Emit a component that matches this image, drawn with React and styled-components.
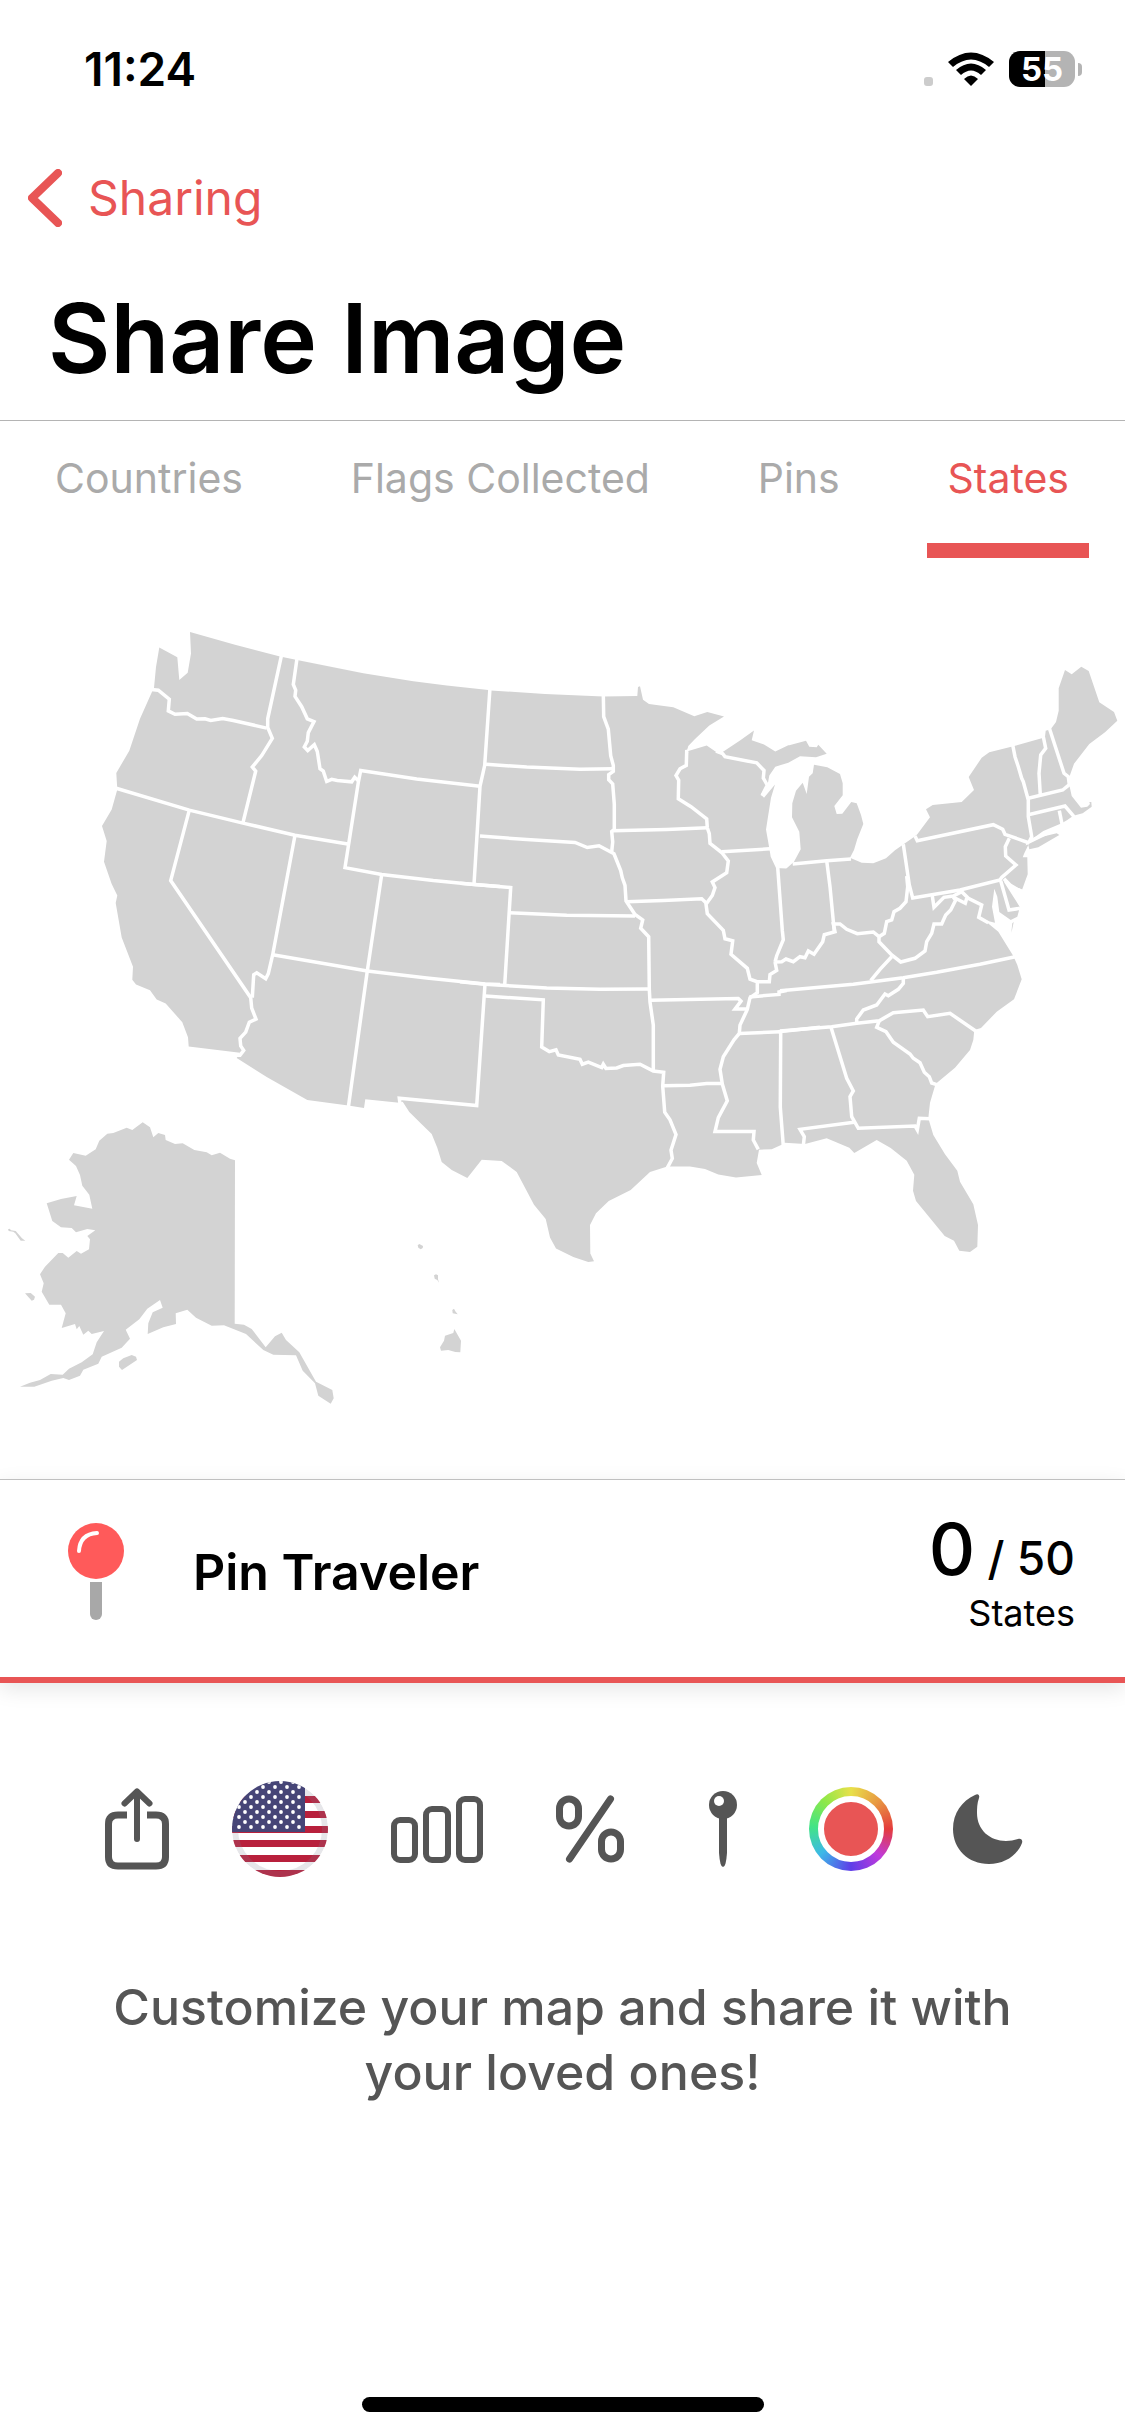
import React, { useId } from "react";
import styled, { createGlobalStyle } from "styled-components";

const RED = "#e85555";
const INK = "#555555";

const Global = createGlobalStyle`
  *, *::before, *::after { box-sizing: border-box; }
  body { margin: 0; background: #ffffff; }
  body, button { font-family: Inter, "Liberation Sans", sans-serif; }
`;

const Page = styled.div`
  display: flex;
  flex-direction: column;
  min-height: 100vh;
  color: #000000;
`;

const StatusBar = styled.header`
  display: flex;
  align-items: center;
  justify-content: space-between;
  height: 138px;
  padding: 0 43px 0 84px;
`;

const Clock = styled.time`
  font-size: 46px;
  line-height: 56px;
  font-weight: 600;
`;

const StatusIcons = styled.div`
  display: flex;
  align-items: center;
  gap: 15px;
`;

const BatteryBox = styled.div`
  display: flex;
  align-items: center;
  gap: 3px;
`;

const BatteryBody = styled.span`
  width: 66px;
  height: 36px;
  border-radius: 11px;
  background: linear-gradient(to right, #000000 55%, #b4b4b4 55%);
  color: #ffffff;
  font-size: 33px;
  line-height: 36px;
  font-weight: 700;
  text-align: center;
`;

const BatteryTip = styled.span`
  width: 4px;
  height: 13px;
  border-radius: 0 6px 6px 0;
  background: #b4b4b4;
`;

const BackButton = styled.button`
  display: flex;
  align-items: center;
  align-self: flex-start;
  gap: 26px;
  height: 120px;
  padding: 0 28px;
  border: 0;
  background: none;
  color: ${RED};
  font-size: 48px;
  line-height: 60px;
`;

const Title = styled.h1`
  margin: 0;
  padding: 20px 48px 22px;
  font-size: 96px;
  line-height: 120px;
  font-weight: 600;
`;

const Tabs = styled.nav`
  display: flex;
  justify-content: space-between;
  padding: 0 36px 0 35px;
  border-top: 1px solid #b4b4b4;
`;

const Tab = styled.button`
  height: 137px;
  padding: 0 20px 8px;
  border: 0;
  border-bottom: 15px solid ${(p) => (p.$active ? RED : "transparent")};
  background: none;
  color: ${(p) => (p.$active ? RED : "#aaaaaa")};
  font-size: 41px;
  line-height: 50px;
`;

const MapPanel = styled.main`
  padding: 42px 0 48px;
`;

const MapDrawing = styled.svg`
  display: block;
  width: 100%;
  height: auto;
`;

const Summary = styled.section`
  display: flex;
  align-items: center;
  padding: 0 50px 14px 68px;
  height: 204px;
  border-top: 1px solid #c0c0c0;
  border-bottom: 6px solid ${RED};
  box-shadow: 0 6px 20px rgba(0, 0, 0, 0.1);
`;

const Brand = styled.h2`
  flex: 1;
  margin: 0 0 0 68px;
  font-size: 50px;
  line-height: 64px;
  font-weight: 600;
`;

const Score = styled.div`
  display: flex;
  flex-direction: column;
  align-items: flex-end;
  padding-top: 8px;
`;

const Count = styled.div`
  font-size: 46px;
  line-height: 66px;
  font-weight: 500;
`;

const CountValue = styled.span`
  font-size: 72px;
`;

const CountUnit = styled.div`
  font-size: 36px;
  line-height: 44px;
`;

const Toolbar = styled.div`
  display: flex;
  align-items: center;
  justify-content: space-between;
  padding: 98px 102px 0 105px;
`;

const Tool = styled.button`
  display: flex;
  justify-content: center;
  width: ${(p) => p.$width}px;
  padding: 0;
  border: 0;
  background: none;
  color: ${INK};
`;

const ColourWheel = styled.span`
  display: flex;
  flex: none;
  align-items: center;
  justify-content: center;
  width: 84px;
  height: 84px;
  border-radius: 50%;
  background: conic-gradient(#e8e04a, #e89a42 12%, #e43c3c 25%, #c03adc 37%, #5e3ee8 50%, #3cb8e8 64%, #42e486 76%, #8ee848 88%, #e8e04a);
`;

const ColourDot = styled.span`
  width: 66px;
  height: 66px;
  border: 6px solid #ffffff;
  border-radius: 50%;
  background: ${RED};
`;

const Hint = styled.p`
  margin: 98px 100px 0;
  color: ${INK};
  font-size: 50px;
  line-height: 65px;
  font-weight: 500;
  text-align: center;
`;

const HomeIndicator = styled.div`
  align-self: center;
  width: 402px;
  height: 15px;
  margin: auto 0 24px;
  border-radius: 8px;
  background: #000000;
`;

const sheet = (x0, y0, sx, sy) => (text) =>
  text.trim().split(/\s+/).map((pair) => {
    const [x, y] = pair.split(",").map(Number);
    return `${(x0 + x / sx).toFixed(1)},${(y0 + y / sy).toFixed(1)}`;
  });

const west = sheet(80, 600, 3, 2.904);
const mid = sheet(460, 640, 3, 2.376);
const north = sheet(780, 640, 3, 3);
const south = sheet(780, 920, 3, 3);
const far = sheet(0, 1100, 3, 3);

const mainland = [
  ...west("218,262 222,255 228,195 238,138 292,166 298,232 323,211 333,155 330,93 465,130 600,164 655,175 850,213 1000,236 1100,248 1225,261"),
  ...mid("92,120 255,128 430,134 532,133 534,112 540,110 549,142 567,152 640,160 703,181 742,171 792,182 748,203 705,235 685,252 680,265 740,251 772,268 788,266 840,239 882,215 875,238 912,248 946,265 985,250"),
  ...north("28,316 78,302 88,320 110,322 115,314 140,341 108,352 60,349 25,368 0,376"),
  ...mid("946,301 928,322 922,348 903,366 912,375 945,343 933,375 928,400 918,450 928,495 932,515 948,542 978,543"),
  ...north("20,685 42,665 62,628 58,575 36,532 37,490 48,452 68,428 80,462 87,410 98,400 102,374 142,382 180,402 188,430 188,466 163,498 170,522 187,521 214,486 230,490 243,525 250,552 232,597 222,630 210,653 245,668 280,670 318,655 345,631 403,590 412,583 450,532 438,508 458,495 545,486 582,450 566,411 605,353 628,337 700,319 785,295 795,290 797,272 812,268 828,246 836,212 836,145 855,90 875,103 904,80 926,93 958,187 1002,216 1012,242 975,277 928,312 882,371 870,405 868,435 875,468 903,503 922,500 930,492 928,486 934,486 935,500 908,520 880,527 862,540 845,550 790,573 755,598 830,580 838,585 775,622 748,628 745,615 733,640 728,652 742,652 743,703 725,752 718,745 700,742 678,722 720,800 712,830 692,840 658,816 652,770 643,746 636,800 645,848 612,840"),
  ...south("655,35 700,108 712,135 725,178 702,238 650,275 603,324 583,330 580,360 570,390 525,443 470,489 465,497 450,548 445,595 460,645 495,703 532,752 540,785 580,853 594,915 592,980 570,996 538,992 522,962 494,948 408,843 399,812 403,764 380,722 332,684 290,660 223,699 208,683 140,655 75,672 15,668"),
  ...mid("968,1198 935,1210 897,1211 890,1243 905,1271 828,1277 775,1270 735,1257 690,1251 622,1251 570,1264 512,1307 446,1333 408,1362 390,1390 391,1458 402,1476 385,1478 340,1466 288,1446 270,1420 257,1376 222,1342 170,1264 125,1238 65,1235"),
  ...far("1402,234 1355,210 1325,186 1312,143 1295,102 1262,70 1228,36 1208,5"),
  ...west("958,1460 856,1450 852,1475 805,1468 682,1452 560,1385 470,1330 480,1315 326,1297 324,1270 307,1226 257,1172 230,1160 210,1133 168,1117 157,1103 159,1065 125,980 107,880 112,858 95,825 72,760 80,700 66,656 95,608 112,550 109,502 148,438 180,345"),
];

const islands = [
  far("207,179 220,159 257,167 287,148 298,122 322,101 340,99 380,83 397,90 428,67 450,82 460,112 475,99 495,105 497,120 525,132 548,130 583,150 620,157 635,166 660,158 690,176 705,181 704,671 732,674 755,687 797,742 825,709 845,698 858,720 898,757 948,845 997,870 1001,895 992,911 955,887 945,850 908,812 888,766 820,764 790,750 738,702 672,676 635,677 588,653 562,629 527,640 528,672 490,682 443,702 445,670 458,637 488,623 480,600 442,626 418,658 377,689 390,716 365,743 305,770 295,791 250,809 240,827 207,840 190,834 155,842 103,860 60,860 90,848 120,840 152,822 188,824 207,806 245,787 278,763 290,727 312,693 275,702 265,692 250,704 238,678 230,688 225,672 185,684 197,640 183,614 148,614 125,575 131,550 120,523 135,500 175,459 188,459 205,473 230,453 243,461 267,448 270,418 262,408 286,391 262,387 228,397 215,384 183,382 157,363 140,310 183,297 230,288 222,316 277,326 268,284 247,257 240,225 228,198"),
  far("357,785 370,775 395,765 408,770 411,780 366,810 357,800"),
  far("75,580 92,579 105,590 102,599 95,602"),
  far("24,388 29,386 33,391 47,393 66,415 76,422 62,422 46,400 40,395 26,393"),
  far("1253,436 1258,432 1269,438 1268,444 1262,448 1255,443"),
  far("1302,526 1308,523 1314,526 1314,538 1317,548 1312,540 1304,536"),
  far("1357,630 1362,626 1366,634 1373,643 1358,640"),
  far("1335,707 1360,699 1363,687 1383,722 1381,757 1366,756 1345,750 1323,752 1320,742 1332,722"),
  north("701,846 697,866 694,878 697,850"),
];

const borders = [
  west("214,260 235,262 268,288 265,322 285,332 322,330 350,346 375,345 392,350 428,344 460,350 560,372"),
  west("605,158 563,345 563,370 577,402 545,452 517,485 527,497 489,646"),
  west("651,170 640,245 647,262 645,280 665,310 682,345 702,353 685,385 682,410 673,427 683,437 703,420 712,440 720,490 730,497 740,527 755,521 772,524 815,528 824,515 835,525"),
  west("1230,255 1214,480 1200,541 1182,826"),
  west("1200,541 1010,520 842,495 835,530 795,777 905,797 1060,815 1182,826 1260,832"),
  west("106,546 328,610 489,648 645,683 803,709"),
  west("328,610 272,815 512,1155 515,1185 528,1217 508,1226 497,1255 480,1273 482,1295 491,1308 480,1322 464,1322"),
  west("645,683 578,1030 565,1085 557,1100 530,1083 521,1088 517,1155"),
  west("578,1030 862,1077 1040,1098 1215,1115 1260,1117"),
  west("905,797 862,1077 805,1474"),
  west("1215,1115 1190,1468 958,1447 960,1464"),
  mid("78,295 200,302 360,307 460,306"),
  mid("430,128 431,182 445,212 452,275 460,298 460,312 446,320 446,332 458,342 463,390 463,450 455,455 458,480 455,503"),
  mid("60,466 200,474 345,481 382,493 417,489 462,508 482,548 487,565 495,583 498,620 525,652 548,665 542,685 566,705 568,830 570,860 580,915 580,1025"),
  mid("457,453 620,450 742,446"),
  mid("0,578 152,588 134,820"),
  mid("148,648 320,654 525,656"),
  mid("0,812 76,818 260,827 420,830 566,829"),
  mid("500,622 610,619 725,615 740,626"),
  mid("76,846 250,855 245,967 268,978 288,974 295,986 360,996 367,1008 385,1003 425,1016 430,1008 438,1018 470,1017 490,1011 540,1008 580,1024 611,1027 608,1060 614,1122 630,1140 648,1175 633,1212 637,1232 622,1254"),
  mid("608,1059 690,1058 740,1054 787,1054"),
  mid("570,856 835,852 843,858 825,877 860,877"),
  mid("685,264 680,265 679,298 660,306 648,322 656,333 655,377 693,396 740,425 742,446 748,460 750,483 785,505 805,525 800,553 757,575 765,588 757,607 738,628 742,650 790,690 795,710 818,715 813,747 862,780 870,806 892,812 892,838 870,850 862,878 840,915 838,935 822,950 790,990 780,1020 787,1055 802,1095 775,1135 765,1168 882,1168 880,1188 895,1210"),
  mid("785,503 930,496"),
  mid("768,264 788,270 795,277 890,292 912,310 910,328 922,345 906,370 940,330"),
  mid("953,540 967,690 970,712 950,750 945,765"),
  mid("890,812 928,812 930,795 950,785 945,765"),
  north("-15,966 5,965 18,957 40,965 60,950 75,953 85,933 102,943 128,905 133,884 165,875 160,852 180,852 200,868 232,881 280,876 297,890 297,905 335,945 362,966 405,955 435,933 440,905 455,880 462,852 485,852 497,825 512,810 527,780 520,772"),
  north("38,672 140,662 213,657"),
  north("140,662 150,740 163,875"),
  north("370,613 388,735 398,774 540,750 660,720 665,712 708,675 677,648 676,620 688,595"),
  north("405,588 412,602 640,554 668,568 675,583 748,609"),
  north("380,708 383,740 378,785 360,805 342,815 335,840 320,845 313,880 297,890"),
  north("457,768 462,802 492,772 520,768 545,755 565,775 605,795 596,832 625,848"),
  north("520,772 556,790 560,775"),
  north("662,722 687,810 720,805"),
  north("672,716 690,735 712,748 722,752 720,792 676,722"),
  north("698,315 705,350 715,380 725,415 730,425 745,480 745,530 755,590 748,605 790,585 850,558"),
  north("790,290 797,325 782,345 777,400 781,465"),
  north("808,264 852,400 865,410 868,434 848,450 745,475"),
  north("745,524 855,498 882,530"),
  north("838,512 846,552"),
  mid("868,848 957,842 957,836 980,833"),
  south("0,212 220,193 370,173 470,157 600,133 706,110"),
  south("335,110 300,148 272,182"),
  south("370,173 370,190 355,208 325,227 315,222 290,255 250,270 230,297 230,310"),
  mid("838,935 960,931"),
  south("0,333 155,320 230,310 298,302 340,278 430,270 443,290 510,280 588,334"),
  south("298,302 290,322 318,335 340,367 390,402 400,415 420,428 433,457 448,470 455,489 470,494"),
  mid("962,931 961,1110 970,1202"),
  south("153,322 200,475 220,513 210,530 215,590 235,625 405,618 412,630 418,595 449,596"),
  south("222,607 60,628 73,650 70,677"),
  mid("955,931 1080,920"),
];

const StatesMap = () => (
  <MapDrawing viewBox="0 600 1125 831" role="img" aria-label="Map of visited states">
    <g fill="#d3d3d3">
      <polygon points={mainland.join(" ")} />
      {islands.map((points) => <polygon key={points[0]} points={points.join(" ")} />)}
    </g>
    <g fill="none" stroke="#ffffff" strokeWidth="3.500" strokeLinejoin="miter">
      {borders.map((points) => <polyline key={points.join()} points={points.join(" ")} />)}
    </g>
  </MapDrawing>
);

const Wifi = () => (
  <svg width="46" height="34" viewBox="0 0 46 34" aria-hidden="true">
    <path d="M0 10Q23-9 46 10L41 15Q23 0 5 15Z" />
    <path d="M8 18Q23 5 38 18L33 23Q23 14 13 23Z" />
    <path d="M16 27Q23 20 30 27L23 34Z" />
  </svg>
);

const SignalDot = () => (
  <svg width="9" height="34" viewBox="0 0 9 34" aria-hidden="true">
    <rect y="25" width="9" height="9" rx="3" fill="#cccccc" />
  </svg>
);

const Chevron = () => (
  <svg width="34" height="58" viewBox="0 0 34 58" fill="none" aria-hidden="true">
    <path d="M30 4 4 29 30 54" stroke="currentColor" strokeWidth="8" strokeLinecap="round" strokeLinejoin="round" />
  </svg>
);

const PinLogo = () => (
  <svg width="57" height="97" viewBox="0 0 57 97" aria-hidden="true">
    <circle cx="28" cy="28" r="28" fill="#ff5a5a" />
    <path d="M11 28Q12 11 29 10" fill="none" stroke="#ffffff" strokeWidth="4" strokeLinecap="round" />
    <path d="M22 59H34V91a6 6 0 0 1-12 0Z" fill="#a8a8a8" />
  </svg>
);

const ShareIcon = () => (
  <svg width="64" height="84" viewBox="0 0 64 84" fill="none" stroke="currentColor" aria-hidden="true">
    <path d="M22 28H13Q3.500 28 3.500 37V70Q3.500 79 13 79H51Q60.500 79 60.500 70V37Q60.500 28 51 28H42" strokeWidth="7" />
    <path d="M32 52V5M19.500 16.500 32 4.500 44.500 16.500" strokeWidth="6" strokeLinecap="round" strokeLinejoin="round" />
  </svg>
);

const FlagIcon = () => {
  const id = useId();
  const stars = [];
  for (let row = 0; row < 10; row += 1) {
    for (let col = 0; col < 7; col += 1) {
      stars.push([col * 12 + (row % 2 ? 6 : 0), 46 - row * 5]);
    }
  }
  return (
    <svg width="96" height="96" viewBox="0 0 96 96" aria-hidden="true">
      <clipPath id={id}><circle cx="48" cy="48" r="48" /></clipPath>
      <g clipPath={`url(#${id})`}>
        <rect width="96" height="96" fill="#ffffff" />
        {[15, 30, 45, 59, 74, 89].map((y) => <rect key={y} y={y} width="96" height="7" fill="#b8203c" />)}
        <circle cx="48" cy="48" r="45" fill="none" stroke="#808090" strokeOpacity="0.2" strokeWidth="6" />
        <rect width="73" height="51" fill="#464577" />
        {stars.map(([x, y]) => x < 66 && <circle key={`${x}-${y}`} cx={x + 7} cy={y} r="1.900" fill="#ffffff" />)}
      </g>
    </svg>
  );
};

const BarsIcon = () => (
  <svg width="92" height="67" viewBox="0 0 92 67" fill="none" stroke="currentColor" strokeWidth="6" aria-hidden="true">
    <rect x="3" y="24" width="21" height="40" rx="6" />
    <rect x="35" y="13" width="22" height="51" rx="6" />
    <rect x="68" y="3" width="21" height="61" rx="6" />
  </svg>
);

const PercentIcon = () => (
  <svg width="68" height="68" viewBox="0 0 68 68" fill="none" stroke="currentColor" aria-hidden="true">
    <rect x="3.500" y="4" width="19" height="27" rx="9.500" strokeWidth="7" />
    <rect x="45.500" y="37" width="19" height="27" rx="9.500" strokeWidth="7" />
    <path d="M54.500 4 13.500 64" strokeWidth="7" strokeLinecap="round" />
  </svg>
);

const PinIcon = () => (
  <svg width="28" height="76" viewBox="0 0 28 76" fill="currentColor" aria-hidden="true">
    <path d="M10 26H18V62Q17 76 14 76T10 62Z" />
    <circle cx="14" cy="14" r="14" />
    <circle cx="10" cy="10" r="5" fill="#ffffff" />
  </svg>
);

const MoonIcon = () => (
  <svg width="70" height="70" viewBox="0 0 70 70" fill="currentColor" aria-hidden="true">
    <path d="M22 1C25-1 27 1 26 4C24 9 24 15 24 19C24 36 37 47 53 47C57 47 61 46 65 45C68 44 70 46 69 49C64 62 51 70 36 70C15 70 0 55 0 35C0 19 9 7 22 1Z" />
  </svg>
);

const TABS = ["Countries", "Flags Collected", "Pins", "States"];

const TOOLS = [
  { label: "Share", width: 64, icon: <ShareIcon /> },
  { label: "Flag", width: 96, icon: <FlagIcon /> },
  { label: "Statistics", width: 92, icon: <BarsIcon /> },
  { label: "Percentage", width: 88, icon: <PercentIcon /> },
  { label: "Pins", width: 52, icon: <PinIcon /> },
  { label: "Map colour", width: 78, icon: <ColourWheel><ColourDot /></ColourWheel> },
  { label: "Dark mode", width: 70, icon: <MoonIcon /> },
];

export default function App() {
  return (
    <Page>
      <Global />
      <StatusBar>
        <Clock>11:24</Clock>
        <StatusIcons>
          <SignalDot />
          <Wifi />
          <BatteryBox>
            <BatteryBody>55</BatteryBody>
            <BatteryTip />
          </BatteryBox>
        </StatusIcons>
      </StatusBar>
      <BackButton type="button"><Chevron />Sharing</BackButton>
      <Title>Share Image</Title>
      <Tabs>
        {TABS.map((name) => (
          <Tab key={name} type="button" $active={name === "States"}>{name}</Tab>
        ))}
      </Tabs>
      <MapPanel><StatesMap /></MapPanel>
      <Summary>
        <PinLogo />
        <Brand>Pin Traveler</Brand>
        <Score>
          <Count><CountValue>0</CountValue> / 50</Count>
          <CountUnit>States</CountUnit>
        </Score>
      </Summary>
      <Toolbar>
        {TOOLS.map((tool) => (
          <Tool key={tool.label} type="button" aria-label={tool.label} $width={tool.width}>{tool.icon}</Tool>
        ))}
      </Toolbar>
      <Hint>Customize your map and share it with your loved ones!</Hint>
      <HomeIndicator />
    </Page>
  );
}
